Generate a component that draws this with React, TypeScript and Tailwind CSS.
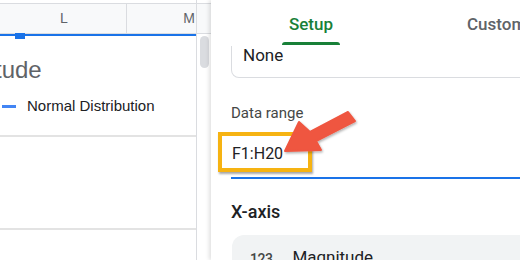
import React from "react";

const Sheet: React.FC = () => {
  return (
    <div className="flex h-full w-[211px] shrink-0 bg-white font-['Liberation_Sans',Arial,sans-serif]">
      <div className="relative w-[197px] shrink-0 overflow-hidden border-r border-[#dadce0]">
        <div className="mt-[3px] flex h-[31px] border-y border-[#dadce0] bg-[#f8f9fa] text-[14px] text-[#5f6368]">
          <div className="flex w-[127px] shrink-0 items-center justify-center border-r border-[#dadce0] pl-[2px]">L</div>
          <div className="flex w-[124px] shrink-0 items-center justify-center">M</div>
        </div>
        <div className="relative h-[2px] bg-[#1a73e8]">
          <div className="absolute left-[15px] top-[-1px] h-[6px] w-[10px] bg-[#1a73e8]" />
        </div>
        <div className="ml-[-5px] mt-[19px] text-[24px] leading-[30px] text-[#5f6368]">tude</div>
        <div className="mt-[12px] flex items-center">
          <div className="ml-[2px] h-[3px] w-[14px] bg-[#4285f4]" />
          <span className="ml-[11px] text-[15px] leading-[18px] text-[#202124]">Normal Distribution</span>
        </div>
        <div className="mt-[20px] h-[2px] w-full bg-[#e3e3e3]" />
        <div className="mt-[91px] h-[2px] w-full bg-[#e3e3e3]" />
      </div>
      <div className="w-[14px] shrink-0">
        <div className="mt-[3px] h-[31px] border-y border-[#dadce0] bg-[#f8f9fa]" />
        <div className="ml-[3px] mt-[2px] h-[32px] w-[9px] rounded-full bg-[#dadce0]" />
      </div>
    </div>
  );
};

const Panel: React.FC = () => {
  return (
    <div className="relative h-full flex-1 overflow-hidden bg-white font-['Roboto','Liberation_Sans',sans-serif] shadow-[-2px_0_4px_rgba(0,0,0,0.12)]">
      <div className="relative z-10 flex h-[46px] bg-white text-[17px] font-medium">
        <div className="ml-[71px] flex flex-col items-center">
          <span className="mt-[13px] leading-[22px] text-[#188038]">Setup</span>
          <div className="mt-[7px] h-[3px] w-[58px] rounded-t-[3px] bg-[#188038]" />
        </div>
        <span className="ml-[127px] mt-[13px] whitespace-nowrap leading-[22px] text-[#5f6368]">Customize</span>
      </div>
      <div className="ml-[20px] mr-[-20px] h-[34px] rounded-b-lg border-x border-b border-[#dadce0] pl-[11px]">
        <div className="mt-[-2px] text-[17px] leading-[22px] text-[#202124]">None</div>
      </div>
      <div className="ml-[20px] mt-[26px] text-[15px] leading-[18px] text-[#444746]">Data range</div>
      <div className="ml-[21px] mt-[22px] text-[16px] leading-[20px] text-[#202124]">F1:H20</div>
      <div className="ml-[20px] mt-[13px] h-[2px] bg-[#1a73e8]" />
      <div className="ml-[20px] mt-[22px] text-[18px] font-medium leading-[22px] text-[#202124]">X-axis</div>
      <div className="ml-[21px] mr-[-20px] mt-[12px] flex h-[40px] items-start rounded-t-[12px] bg-[#f1f3f4] pl-[18px]">
        <span className="mt-[14px] text-[14px] font-medium tracking-[-0.5px] text-[#444746]">123</span>
        <span className="ml-[20px] mt-[10px] text-[17px] text-[#202124]">Magnitude</span>
      </div>
      <div className="absolute left-[7px] top-[132px] h-[40px] w-[94px] border-[4px] border-[#f6b312] shadow-[1px_2px_2px_rgba(0,0,0,0.35)]" />
      <svg className="absolute left-0 top-0" width="309" height="260" viewBox="211 0 309 260">
        <defs>
          <filter id="arrowShadow" x="-20%" y="-20%" width="140%" height="140%">
            <feDropShadow dx="1" dy="1.5" stdDeviation="1" floodColor="#000" floodOpacity="0.3" />
          </filter>
        </defs>
        <polygon
          points="285,151 299,122 310,132 348,112 355,121 316,141 321,150"
          fill="#ef5641"
          stroke="#ef5641"
          strokeWidth="2"
          strokeLinejoin="round"
          filter="url(#arrowShadow)"
        />
      </svg>
    </div>
  );
};

export default function App() {
  return (
    <div className="flex h-[260px] w-[520px] overflow-hidden bg-white">
      <Sheet />
      <Panel />
    </div>
  );
}
